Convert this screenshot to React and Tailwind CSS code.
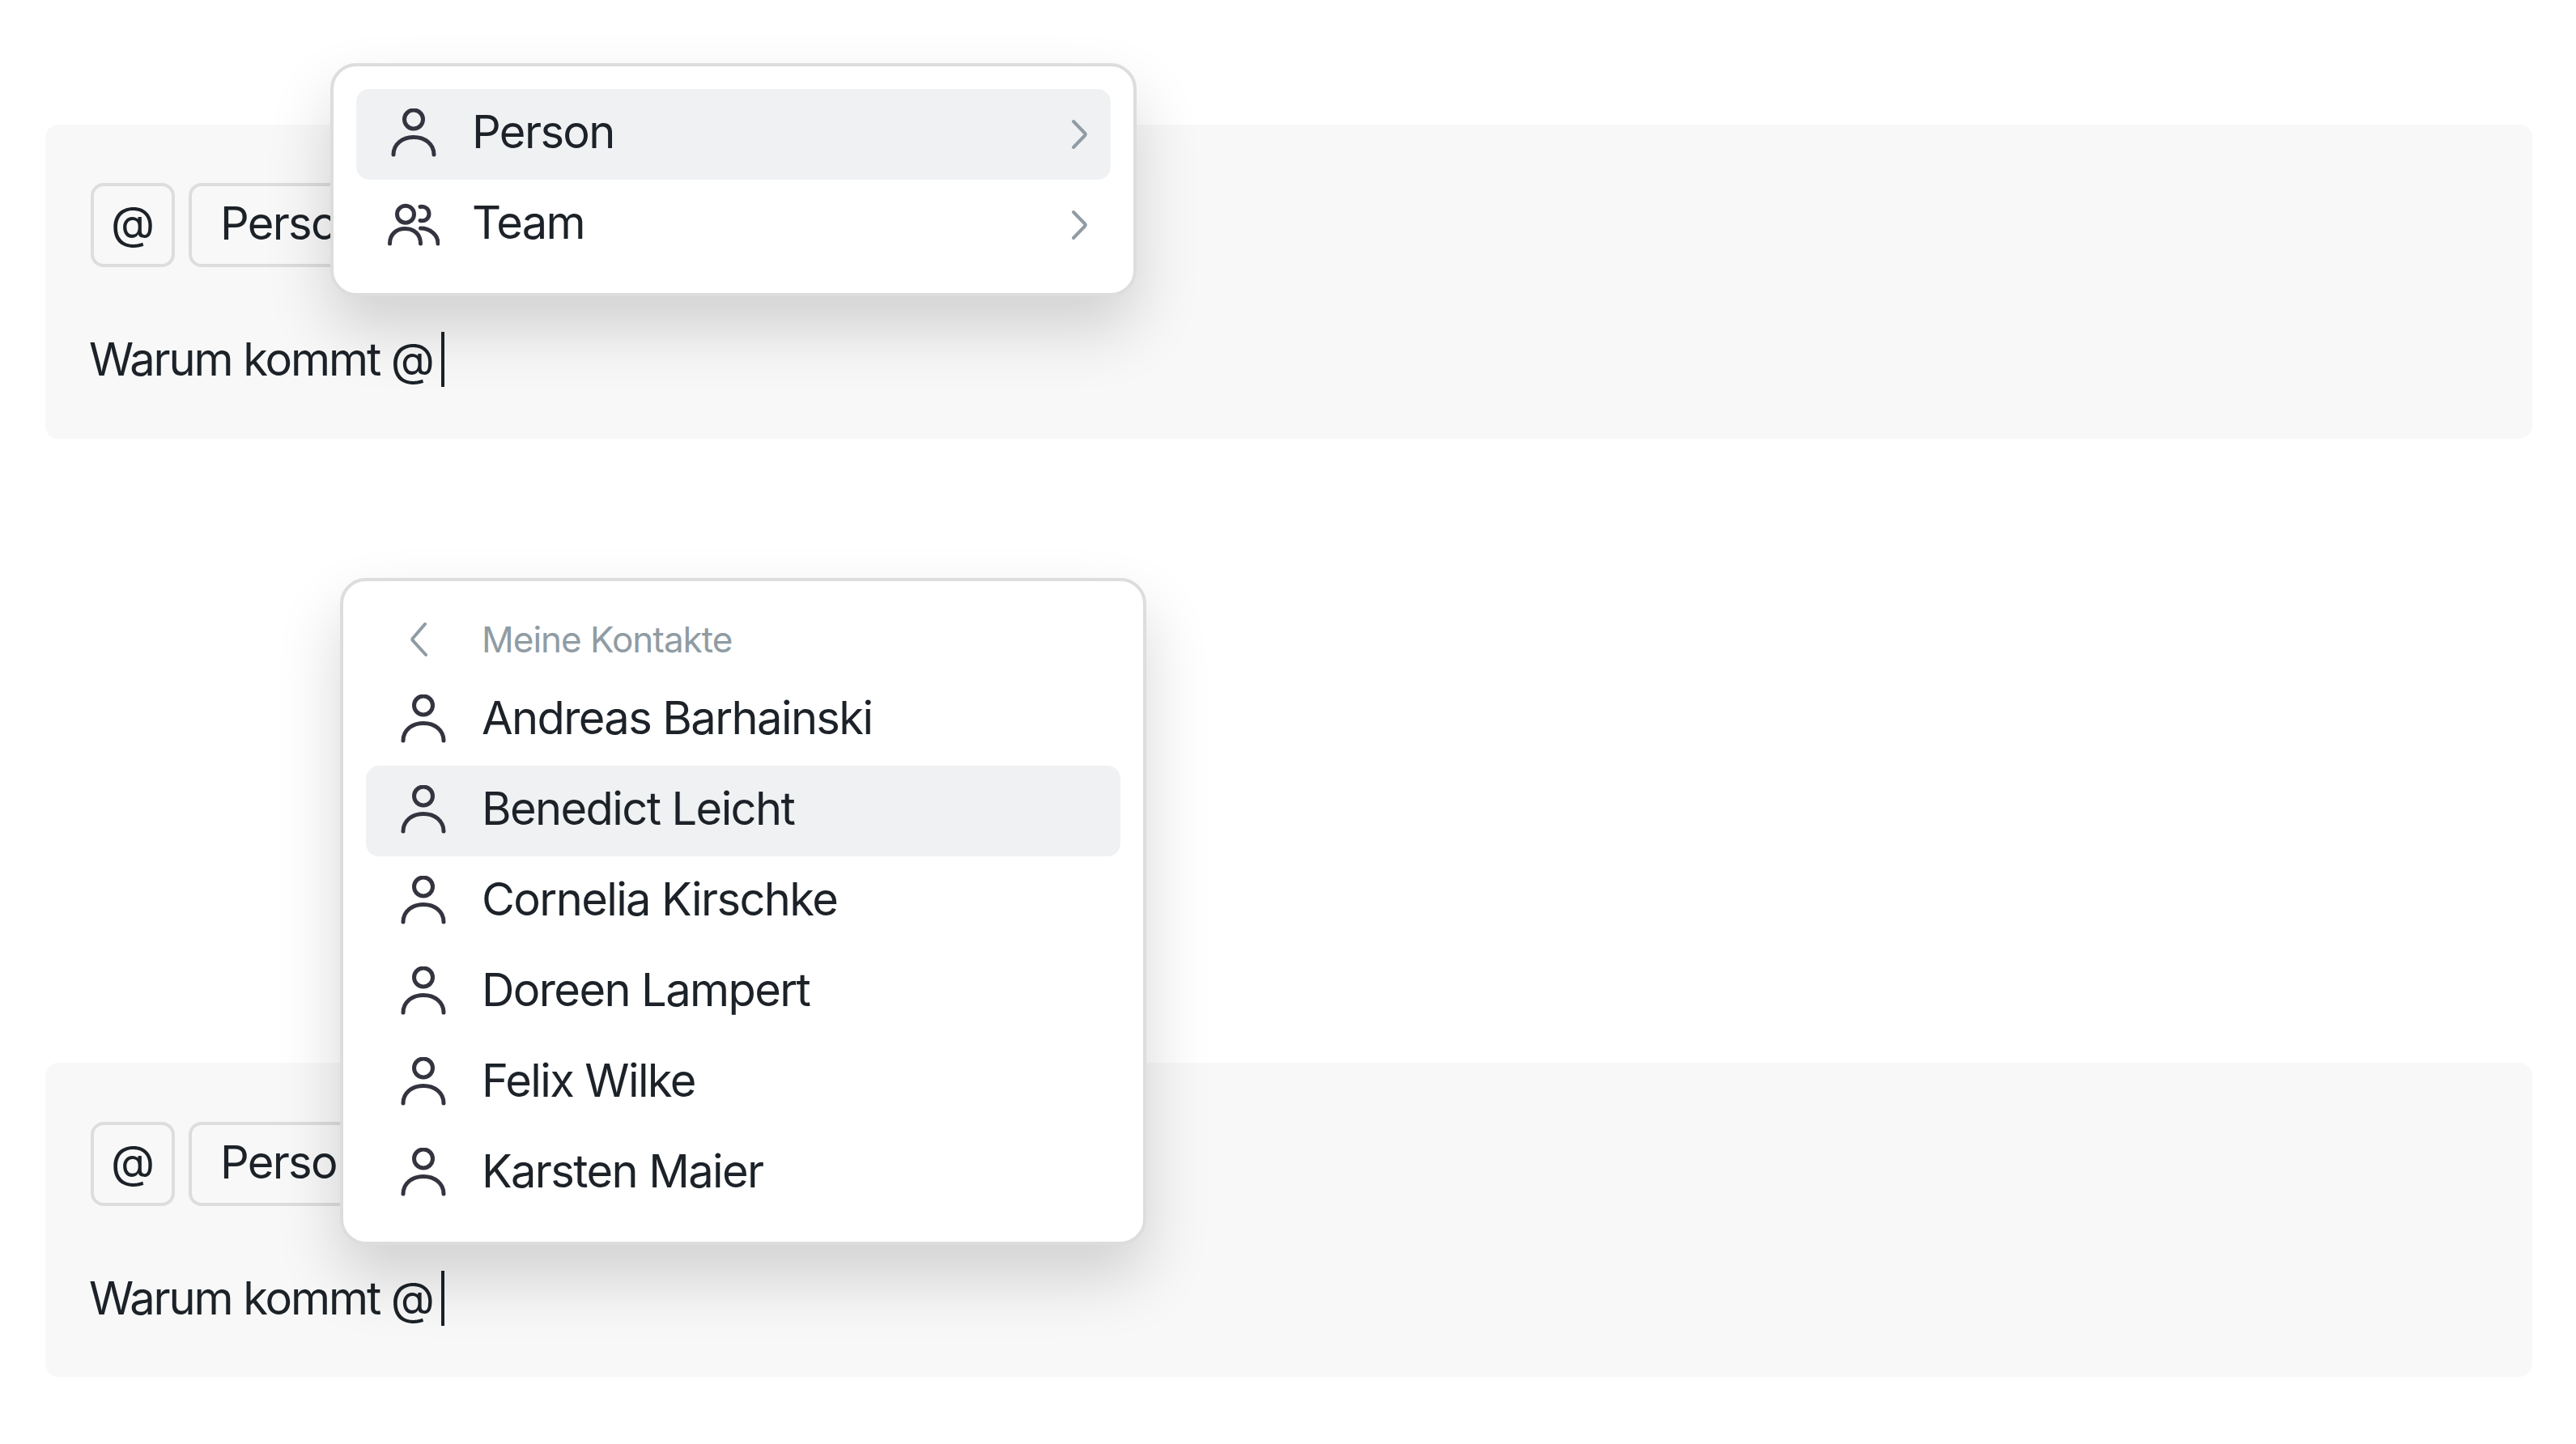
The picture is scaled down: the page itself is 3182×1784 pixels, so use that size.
const contacts = [
  "Andreas Barhainski",
  "Benedict Leicht",
  "Cornelia Kirschke",
  "Doreen Lampert",
  "Felix Wilke",
  "Karsten Maier",
];

const PersonIcon = () => (
  <svg width="64" height="64" viewBox="0 0 64 64" fill="none" stroke="#33343f" strokeWidth="5" strokeLinecap="round" className="shrink-0">
    <circle cx="32" cy="13.5" r="11.5" />
    <path d="M7 57C7 44 18 35.5 32 35.5C46 35.5 57 44 57 57" />
  </svg>
);

const TeamIcon = () => (
  <svg width="64" height="64" viewBox="0 0 64 64" fill="none" stroke="#33343f" strokeWidth="5" strokeLinecap="round" className="shrink-0">
    <circle cx="22" cy="18.7" r="10.5" />
    <path d="M40 9.5C46 8 51 12.5 51 18C51 24 46 28 40 26.5" />
    <path d="M2.5 55C2.5 44 10 36.5 21.5 36.5C33 36.5 40.5 44 40.5 55" />
    <path d="M40.5 36C52 36 62 44 62 55" />
  </svg>
);

const ChevronRight = () => (
  <svg width="24" height="40" viewBox="0 0 24 40" fill="none" stroke="#8f9ca3" strokeWidth="4" strokeLinecap="round" className="shrink-0">
    <path d="M5 4L19 18.5Q20.5 20 19 21.5L5 36" />
  </svg>
);

const ChevronLeft = () => (
  <svg width="24" height="44" viewBox="0 0 24 44" fill="none" stroke="#8f9ca3" strokeWidth="4" strokeLinecap="round" className="shrink-0">
    <path d="M20 3L5 20.5Q3.5 22 5 23.5L21 41" />
  </svg>
);

const MenuRow = ({ icon, label, active, chevron }) => (
  <div className={`flex h-[112px] items-center rounded-2xl pl-[39px] ${active ? "bg-[#f0f1f3]" : ""}`}>
    {icon}
    <span className="ml-[40px] flex-1 pb-[6px] text-[56px] leading-none tracking-[-1.6px]">{label}</span>
    {chevron && (
      <span className="mr-[27px] flex">
        <ChevronRight />
      </span>
    )}
  </div>
);

const Composer = ({ top, children }) => (
  <div className={`relative h-[388px] rounded-2xl bg-[#f8f8f8] pl-[56px] ${top}`}>
    <div className="flex gap-[17px]">
      <div className="flex h-[104px] w-[104px] items-center justify-center rounded-2xl border-4 border-[#dddddd] pb-[6px] text-[56px]">
        @
      </div>
      <div className="flex h-[104px] items-center rounded-2xl border-4 border-[#dddddd] px-[35px] pb-[4px] text-[56px] tracking-[-1.7px]">
        Person
      </div>
    </div>
    <div className="mt-[80px] flex h-[68px] items-center text-[56px] tracking-[-2.1px]">
      <span className="-ml-[2px]">Warum kommt @</span>
      <span className="ml-[10px] h-[68px] w-[4px] bg-[#1c2228]" />
    </div>
    {children}
  </div>
);

const Popup = ({ pos, children }) => (
  <div className={`absolute w-[996px] rounded-[32px] border-4 border-[#dddddd] bg-white p-[28px] shadow-[0_40px_80px_rgba(0,0,0,0.16)] ${pos}`}>
    {children}
  </div>
);

export default function App() {
  return (
    <div className="min-h-[1784px] bg-white pr-[54px] pl-[56px] pt-[154px] font-['Inter',sans-serif] text-[#1c2228]">
      <Composer top="pt-[72px]">
        <Popup pos="top-[-76px] left-[352px]">
          <MenuRow icon={<PersonIcon />} label="Person" active chevron />
          <MenuRow icon={<TeamIcon />} label="Team" chevron />
        </Popup>
      </Composer>

      <Composer top="mt-[771px] pt-[73px]">
        <Popup pos="top-[-599px] left-[364px]">
          <div className="flex h-[88px] items-center pl-[53px]">
            <ChevronLeft />
            <span className="ml-[66px] text-[44px] leading-none tracking-[-1px] text-[#8f9ca3]">Meine Kontakte</span>
          </div>
          {contacts.map((name) => (
            <MenuRow key={name} icon={<PersonIcon />} label={name} active={name === "Benedict Leicht"} />
          ))}
        </Popup>
      </Composer>
    </div>
  );
}
